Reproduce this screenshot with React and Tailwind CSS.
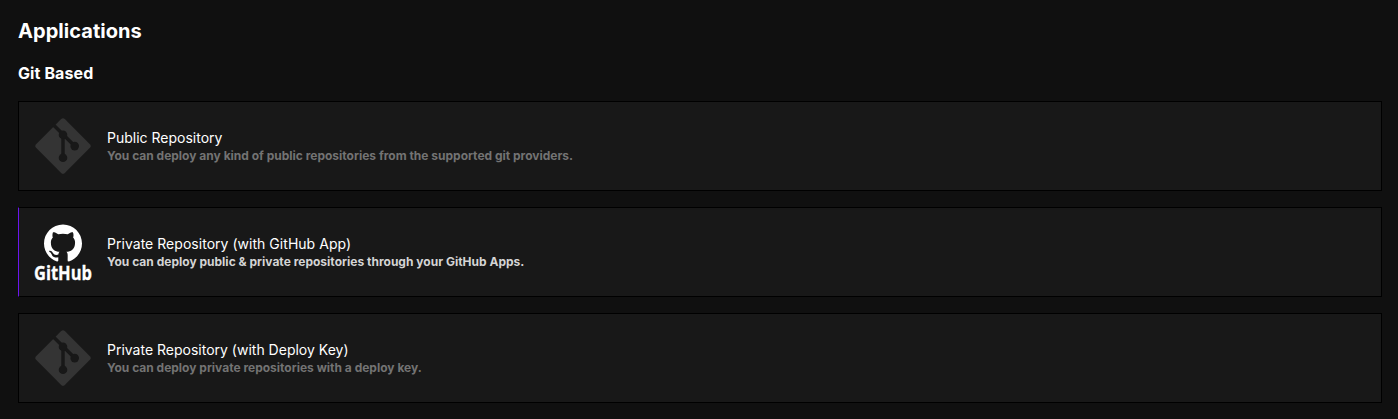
import { SiGithub } from "react-icons/si";

const items = [
  { kind: "git", title: "Public Repository", text: "You can deploy any kind of public repositories from the supported git providers." },
  { kind: "github", title: "Private Repository (with GitHub App)", text: "You can deploy public & private repositories through your GitHub Apps." },
  { kind: "git", title: "Private Repository (with Deploy Key)", text: "You can deploy private repositories with a deploy key." },
];

function GitLogo() {
  return (
    <svg viewBox="0 0 56 56" className="h-14 w-14 shrink-0">
      <path d="M26.2 1.1Q28-.6 29.8 1.1L54.9 26.2Q56.6 28 54.9 29.8L29.8 54.9Q28 56.6 26.2 54.9L1.1 29.8Q-.6 28 1.1 26.2Z" fill="#343434" />
      <path d="M17.5 5.9L39.7 28.1M28 16.7V39.7" fill="none" stroke="#181818" strokeWidth="3.5" />
      <g fill="#181818">
        <circle cx="28" cy="16.7" r="4.3" />
        <circle cx="39.7" cy="28.1" r="4.3" />
        <circle cx="28" cy="39.7" r="4.3" />
      </g>
    </svg>
  );
}

function GitHubLogo() {
  return (
    <div className="flex h-14 w-14 shrink-0 flex-col items-center text-white">
      <SiGithub className="h-[38px] w-[38px] shrink-0" />
      <svg viewBox="0 0 56 18" className="h-[18px] w-14 shrink-0 overflow-visible">
        <text x="-1" y="17.6" textLength="58" lengthAdjust="spacingAndGlyphs" fill="white" stroke="white" strokeWidth="0.3" className="font-['Open_Sans',sans-serif] text-[20px] font-bold">GitHub</text>
      </svg>
    </div>
  );
}

export default function App() {
  return (
    <main className="h-[419px] overflow-hidden bg-[#101010] px-[18px] pt-[17px] font-['Inter',sans-serif] text-white">
      <h2 className="text-xl leading-7 font-bold tracking-[0.05px]">Applications</h2>
      <h4 className="mt-4 text-base leading-6 font-bold tracking-[0.1px]">Git Based</h4>
      <div className="mt-4 mr-[-2px] grid gap-4">
        {items.map(({ kind, title, text }) => (
          <div key={title} className={`flex h-[90px] items-center gap-4 border border-black bg-[#181818] px-4 ${kind === "github" ? "border-l-[#6b16ed]" : ""}`}>
            {kind === "git" ? <GitLogo /> : <GitHubLogo />}
            <div>
              <div className={`text-sm leading-5 ${kind === "github" ? "tracking-[0.03px]" : ""}`}>{title}</div>
              <div className={`text-xs leading-4 font-bold ${kind === "github" ? "tracking-[0.01px] text-[#d4d4d4]" : "text-[#737373]"}`}>{text}</div>
            </div>
          </div>
        ))}
      </div>
    </main>
  );
}
